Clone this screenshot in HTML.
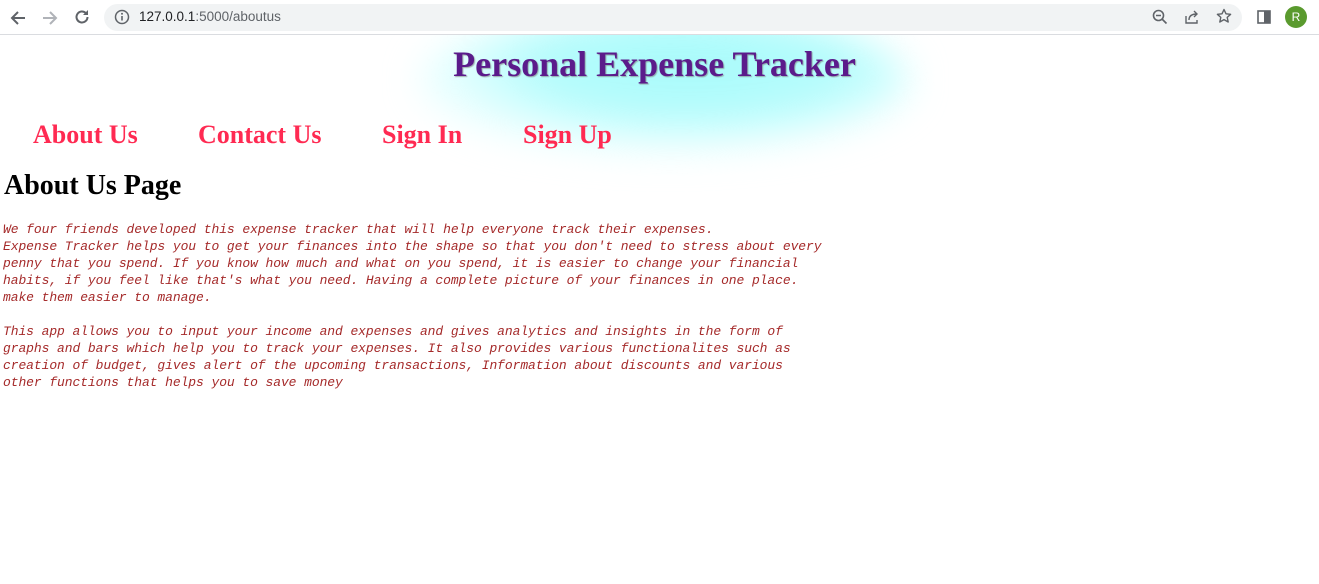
<!DOCTYPE html>
<html><head><meta charset="utf-8"><style>
*{margin:0;padding:0;box-sizing:border-box}
body{width:1319px;height:584px;overflow:hidden;background:#fff;position:relative;font-family:"Liberation Serif",serif}
.bar{position:absolute;left:0;top:0;width:1319px;height:35px;background:#fff;border-bottom:1px solid #dadce0;z-index:2}
.omni{position:absolute;left:104px;top:4px;width:1138px;height:27px;border-radius:14px;background:#f1f3f4}
.url{position:absolute;left:139px;top:9px;font:13.5px "Liberation Sans",sans-serif;color:#202124}
.url span{color:#5f6368}
.ic{position:absolute}
.glow{position:absolute;left:420px;top:10px;width:490px;height:140px;border-radius:50%;background:radial-gradient(ellipse at 55% 40%,#a8fbfb 0%,#b5fcfc 40%,rgba(220,255,255,.7) 65%,rgba(255,255,255,0) 100%);filter:blur(18px)}
.title{position:absolute;left:0;width:1309px;top:43px;text-align:center;font-weight:bold;font-size:36px;color:#5b1b8b;text-shadow:1px 1px 1px rgba(120,120,120,.6)}
.nav a{position:absolute;top:120px;font-weight:bold;font-size:26px;color:#ff2a52;text-decoration:none}
h1{position:absolute;left:4px;top:170px;font-size:28px;font-weight:bold;color:#000}
pre{position:absolute;left:3px;font:italic 13px "Liberation Mono",monospace;letter-spacing:-0.08px;line-height:17px;color:#a52a2a;white-space:pre}
.avatar{position:absolute;left:1285px;top:6px;width:22px;height:22px;border-radius:50%;background:#5a9a2e;color:#fff;font:12px "Liberation Sans",sans-serif;text-align:center;line-height:22px}
</style></head><body>
<div class="glow"></div>
<div class="bar">
<svg class="ic" style="left:9px;top:9px" width="18" height="18" viewBox="0 0 18 18"><path d="M16 9H3M9 3L3 9l6 6" stroke="#5f6368" stroke-width="2" fill="none"/></svg>
<svg class="ic" style="left:41px;top:9px" width="18" height="18" viewBox="0 0 18 18"><path d="M2 9h13M9 3l6 6-6 6" stroke="#b0b3b8" stroke-width="2" fill="none"/></svg>
<svg class="ic" style="left:73px;top:8px" width="18" height="18" viewBox="0 0 18 18"><path d="M14.5 9A5.5 5.5 0 1 1 12.9 5.1" stroke="#5f6368" stroke-width="2" fill="none"/><path d="M15 2v5h-5z" fill="#5f6368"/></svg>
<div class="omni"></div>
<svg class="ic" style="left:114px;top:9px" width="16" height="16" viewBox="0 0 16 16"><circle cx="8" cy="8" r="6.5" stroke="#5f6368" stroke-width="1.5" fill="none"/><path d="M8 7v4.5" stroke="#5f6368" stroke-width="1.6"/><circle cx="8" cy="4.8" r="1" fill="#5f6368"/></svg>
<div class="url">127.0.0.1<span>:5000/aboutus</span></div>
<svg class="ic" style="left:1152px;top:9px" width="16" height="16" viewBox="0 0 16 16"><circle cx="6.5" cy="6.5" r="5" stroke="#5f6368" stroke-width="1.6" fill="none"/><path d="M4 6.5h5M10 10l4.5 4.5" stroke="#5f6368" stroke-width="1.6"/></svg>
<svg class="ic" style="left:1184px;top:9px" width="16" height="16" viewBox="0 0 16 16"><path d="M2 7v7h11v-3" stroke="#5f6368" stroke-width="1.4" fill="none"/><path d="M5 11c0-4 3-6 8-6M10 2l3 3-3 3" stroke="#5f6368" stroke-width="1.4" fill="none"/></svg>
<svg class="ic" style="left:1216px;top:8px" width="16" height="16" viewBox="0 0 16 16"><path d="M8 1.5l2 4.3 4.6.5-3.4 3.1 1 4.6L8 11.6 3.8 14l1-4.6L1.4 6.3 6 5.8z" stroke="#5f6368" stroke-width="1.4" fill="none" stroke-linejoin="round"/></svg>
<svg class="ic" style="left:1257px;top:10px" width="14" height="14" viewBox="0 0 14 14"><rect x="1" y="1" width="12" height="12" stroke="#5f6368" stroke-width="1.6" fill="none"/><rect x="7" y="1" width="6" height="12" fill="#5f6368"/></svg>
<div class="avatar">R</div>
</div>
<div class="title">Personal Expense Tracker</div>
<div class="nav"><a style="left:33px">About Us</a><a style="left:198px">Contact Us</a><a style="left:382px">Sign In</a><a style="left:523px">Sign Up</a></div>
<h1>About Us Page</h1>
<pre style="top:221px">We four friends developed this expense tracker that will help everyone track their expenses.
Expense Tracker helps you to get your finances into the shape so that you don't need to stress about every
penny that you spend. If you know how much and what on you spend, it is easier to change your financial
habits, if you feel like that's what you need. Having a complete picture of your finances in one place.
make them easier to manage.</pre>
<pre style="top:323px">This app allows you to input your income and expenses and gives analytics and insights in the form of
graphs and bars which help you to track your expenses. It also provides various functionalites such as
creation of budget, gives alert of the upcoming transactions, Information about discounts and various
other functions that helps you to save money</pre>
</body></html>
